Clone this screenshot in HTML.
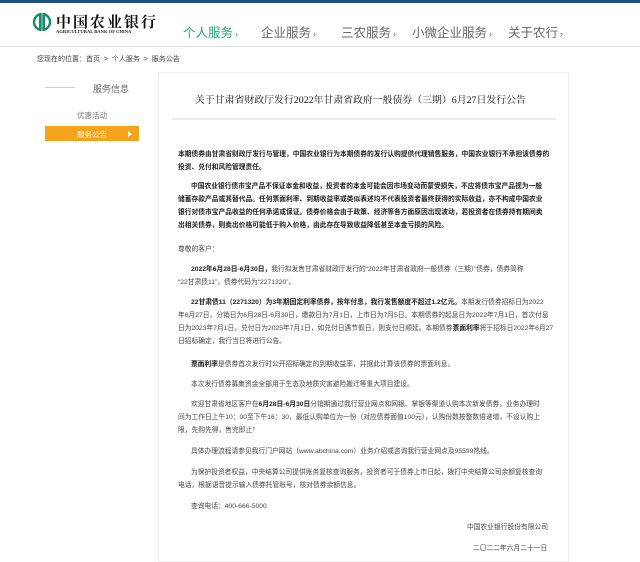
<!DOCTYPE html>
<html><head><meta charset="utf-8"><style>
*{margin:0;padding:0;box-sizing:border-box}
body{width:640px;height:556px;overflow:hidden;background:#fff;font-family:"Liberation Sans","Noto Sans CJK SC",sans-serif;position:relative;color:#333}
.a{position:absolute;white-space:nowrap}
.t{position:absolute;left:178px;font-size:6.75px;color:#444;white-space:nowrap;letter-spacing:0}
.b{font-weight:bold;color:#222}
.nav{position:absolute;top:22px;font-size:12.5px;color:#666}
.nav span{font-size:9px;margin-left:2px}
</style></head><body>
<div class="a" style="left:0;top:0;width:640px;height:3px;background:#1f4e86"></div>
<div class="a" style="left:0;top:46px;width:640px;height:1px;background:#e2e2e2"></div>
<svg class="a" style="left:32px;top:11px" width="20" height="22" viewBox="0 0 20 22"><circle cx="10" cy="11" r="8" fill="none" stroke="#1b8a6b" stroke-width="2.4"/><rect x="7" y="4" width="6" height="14" fill="#1b8a6b"/><rect x="9" y="1" width="2" height="20" fill="#fff"/><rect x="9.3" y="2" width="1.4" height="18" fill="#1b8a6b"/></svg>
<div class="a" style="left:56px;top:11px;font-family:'Noto Serif CJK SC',serif;font-weight:bold;font-size:15px;letter-spacing:2px;color:#111">中国农业银行</div>
<div class="a" style="left:56px;top:29px;font-family:'Liberation Serif',serif;font-weight:bold;font-size:4.6px;color:#222">AGRICULTURAL BANK OF CHINA</div>
<div class="nav" style="left:183px;color:#2aa37e">个人服务<span>›</span></div>
<div class="nav" style="left:261px">企业服务<span>›</span></div>
<div class="nav" style="left:341px">三农服务<span>›</span></div>
<div class="nav" style="left:412px">小微企业服务<span>›</span></div>
<div class="nav" style="left:508px">关于农行<span>›</span></div>
<div class="a" style="left:37px;top:54px;font-size:7px;color:#444">您现在的位置：首页 &nbsp;&gt;&nbsp; 个人服务 &nbsp;&gt;&nbsp; 服务公告</div>
<div class="a" style="left:45px;top:87px;width:30px;height:1px;background:#ccc"></div>
<div class="a" style="left:93px;top:82px;font-size:9px;color:#666">服务信息</div>
<div class="a" style="left:77px;top:110px;font-size:7.5px;color:#777">优惠活动</div>
<div class="a" style="left:45px;top:126px;width:94px;height:15px;background:#f5a31a"></div>
<div class="a" style="left:77px;top:129px;font-size:7.5px;color:#fff">服务公告</div>
<div class="a" style="left:128px;top:131px;width:0;height:0;border-left:4px solid #fff;border-top:3.5px solid transparent;border-bottom:3.5px solid transparent"></div>
<div class="a" style="left:158px;top:72px;width:411px;height:490px;border:1px solid #eee;background:#fff"></div>
<div class="a" style="left:195px;top:92px;font-family:'Liberation Serif','Noto Serif CJK SC',serif;font-size:9.9px;color:#111">关于甘肃省财政厅发行2022年甘肃省政府一般债券（三期）6月27日发行公告</div>
<div class="a" style="left:172px;top:118px;width:384px;height:2px;background:#ececec"></div>

<div class="t b" style="top:148px">本期债券由甘肃省财政厅发行与管理，中国农业银行为本期债券的发行认购提供代理销售服务，中国农业银行不承担该债券的</div>
<div class="t b" style="top:161px">投资、兑付和风险管理责任。</div>
<div class="t b" style="top:180px;left:191px">中国农业银行债市宝产品不保证本金和收益，投资者的本金可能会因市场变动而蒙受损失，不应将债市宝产品视为一般</div>
<div class="t b" style="top:193px">储蓄存款产品或其替代品。任何票面利率、到期收益率或类似表述均不代表投资者最终获得的实际收益，亦不构成中国农业</div>
<div class="t b" style="top:206px">银行对债市宝产品收益的任何承诺或保证。债券价格会由于政策、经济等各方面原因出现波动，若投资者在债券持有期间卖</div>
<div class="t b" style="top:219px">出相关债券，则卖出价格可能低于购入价格，由此存在导致收益降低甚至本金亏损的风险。</div>
<div class="t" style="top:243px">尊敬的客户：</div>
<div class="t" style="top:263px;left:191px"><span class="b">2022年6月28日-6月30日，</span>我行拟发售甘肃省财政厅发行的“2022年甘肃省政府一般债券（三期）”债券，债券简称</div>
<div class="t" style="top:276px">“22甘肃债11”，债券代码为“2271320”。</div>
<div class="t" style="top:296px;left:191px"><span class="b">22甘肃债11（2271320）为3年期固定利率债券，按年付息，我行发售额度不超过1.2亿元。</span>本期发行债券招标日为2022</div>
<div class="t" style="top:309px">年6月27日，分销日为6月28日-6月30日，缴款日为7月1日，上市日为7月5日。本期债券的起息日为2022年7月1日，首次付息</div>
<div class="t" style="top:322px">日为2023年7月1日，兑付日为2025年7月1日，如兑付日遇节假日，则支付日顺延。本期债券<span class="b">票面利率</span>将于招标日2022年6月27</div>
<div class="t" style="top:335px">日招标确定，我行当日将进行公告。</div>
<div class="t" style="top:358px;left:191px"><span class="b">票面利率</span>是债券首次发行时公开招标确定的到期收益率，并据此计算该债券的票面利息。</div>
<div class="t" style="top:378px;left:191px">本次发行债券募集资金全部用于生态及地质灾害避险搬迁等重大项目建设。</div>
<div class="t" style="top:398px;left:191px">欢迎甘肃省地区客户在<span class="b">6月28日-6月30日</span>分销期通过我行营业网点和网银、掌银等渠道认购本次新发债券，业务办理时</div>
<div class="t" style="top:411px">间为工作日上午10：00至下午16：30，最低认购单位为一份（对应债券面值100元），认购份数按整数倍递增，不设认购上</div>
<div class="t" style="top:424px">限，先购先得，售完即止！</div>
<div class="t" style="top:445px;left:191px">具体办理流程请参见我行门户网站（www.abchina.com）业务介绍或咨询我行营业网点及95599热线。</div>
<div class="t" style="top:466px;left:191px">为保护投资者权益，中央结算公司提供账务复核查询服务，投资者可于债券上市日起，拨打中央结算公司余额复核查询</div>
<div class="t" style="top:479px">电话，根据语音提示输入债券托管账号，核对债券余额信息。</div>
<div class="t" style="top:500px;left:191px">查询电话：400-666-5000</div>
<div class="t" style="top:521px;left:467px">中国农业银行股份有限公司</div>
<div class="t" style="top:542px;left:473px">二〇二二年六月二十一日</div>
</body></html>
